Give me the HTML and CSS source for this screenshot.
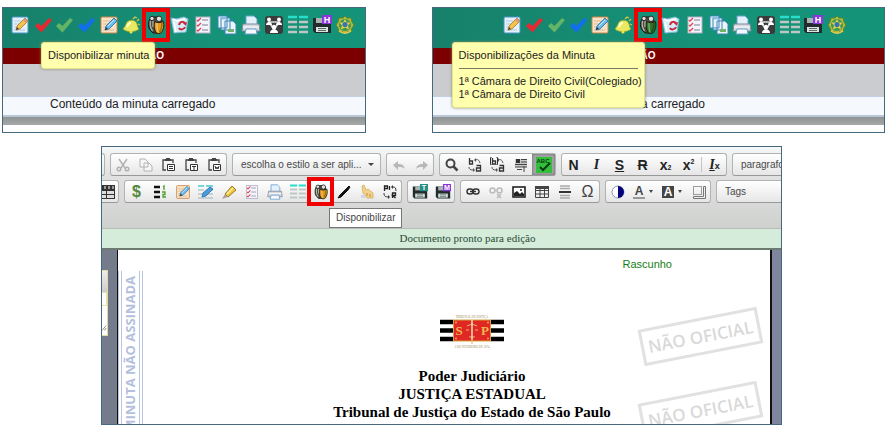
FILE: index.html
```html
<!DOCTYPE html>
<html lang="pt-BR">
<head>
<meta charset="utf-8">
<title>Disponibilizar minuta</title>
<link rel="stylesheet" href="styles.css">
</head>
<body>
<svg class="sprite" aria-hidden="true">
  <symbol id="i-edit" viewBox="0 0 20 20"><rect x="2" y="2" width="16" height="16" rx="1" fill="#e4f1fb" stroke="#4b93c4"/><path d="M4 6h7M4 9h5M4 12h3M4 15h11" stroke="#a9cde8"/><path d="M6 15l1-4 8-8 3 3-8 8z" fill="#f6c24a" stroke="#a8762a" stroke-width=".8"/><path d="M13 5l2-2 3 3-2 2z" fill="#d99a7a"/><path d="M6 15l1-3 2 2z" fill="#444"/></symbol>
  <symbol id="i-sign" viewBox="0 0 20 20"><rect x="2" y="2" width="16" height="16" rx="1" fill="#f8e3c8" stroke="#c98448"/><path d="M4 6h7M4 9h5M4 12h3M4 15h11" stroke="#e3b98c"/><path d="M6 15l1-4 8-8 3 3-8 8z" fill="#69bdf0" stroke="#1f6a9f" stroke-width=".8"/><path d="M9 11l6-6" stroke="#c8ecff"/><path d="M6 15l1-3 2 2z" fill="#333"/></symbol>
  <symbol id="i-check" viewBox="0 0 20 20"><path d="M2 11l3-3 3.500 3 7.500-8 3 2-10.500 12.500z" fill="currentColor"/></symbol>
  <symbol id="i-bell" viewBox="0 0 20 20"><path d="M1 14c1-2 2-2 3-5 1-4 7-5 10-2 2 3 1 5 3 7-3 3-12 4-16 0z" fill="#e9ea62" stroke="#8fa233" stroke-width=".8"/><path d="M5 12c1-2 1-4 4-4" fill="none" stroke="#ffffd0" stroke-width="2"/><path d="M11 4l2-2 2 1M15 6l2-2M16 9l2 1" stroke="#cfc748" fill="none" stroke-width="1.300"/><circle cx="9" cy="17" r="1.600" fill="#f5df43"/></symbol>
  <symbol id="i-jug" viewBox="0 0 20 20"><path d="M4 4C2 7 2 12 4 15l3 3h5l4-3V5l-3-3H6z" fill="#4c4a42" stroke="#171714"/><path d="M4.500 6c-1 4 0 7 2 10M7 6v6" stroke="#b9b8ac" stroke-width="1.300" fill="none"/><circle cx="6" cy="3.500" r="2.200" fill="#dcdcd8" stroke="#2a2a28"/><path d="M8.500 6.500c2 1.500 6 1.500 9 0 1 4 0 8-2 11-2 1.500-4 1.500-5.500 0-2-3-2-7-1.500-11z" fill="currentColor" stroke="#242012"/><circle cx="13" cy="3.800" r="2.700" fill="#e3e2dc" stroke="#2a2a28"/><path d="M11 8c0 4 0 7 1 9" stroke="#fff" stroke-opacity=".35" stroke-width="1.500" fill="none"/><path d="M16 8c0 3-1 7-2.500 9" stroke="#000" stroke-opacity=".3" stroke-width="1.500" fill="none"/></symbol>
  <symbol id="i-recycle" viewBox="0 0 20 20"><path d="M1 3l5 1 8-2 4 2-2 13-12 1z" fill="#d5edf9" stroke="#7fbad6"/><path d="M3 4l4 2 8-2M4 7l2 10" fill="none" stroke="#fff" stroke-width="1.500"/><path d="M9 10c1-4 5-4 6-1M15 12c-1 3-5 3-6 1" fill="none" stroke="#c92639" stroke-width="2"/><path d="M13 8l4-1-1 4z" fill="#c92639"/></symbol>
  <symbol id="i-list" viewBox="0 0 20 20"><rect x="3" y="2" width="14" height="16" fill="#f5f4fa" stroke="#b2afc6"/><path d="M9 5h6M9 10h6M9 15h6" stroke="#a2a5ba" stroke-width="1.500"/><path d="M4 5l1 1 3-3M4 10l1 1 3-3M4 15l1 1 3-3" fill="none" stroke="#df4655" stroke-width="1.400"/></symbol>
  <symbol id="i-docs" viewBox="0 0 20 20"><g fill="#e9f4fd" stroke="#3e83b6"><path d="M1 1h9v12H1zM4 3h9v12H4zM8 6h8l3 3v10H8z"/></g><path d="M2 2h7M5 4h7" stroke="#8dc1e5"/><path d="M11 14h6v3h-6z" fill="#75b36c"/></symbol>
  <symbol id="i-print" viewBox="0 0 20 20"><path d="M5 1h8l3 3v6H5z" fill="#e3f1fc" stroke="#6aa0cd"/><path d="M2 9h16l1 7H1z" fill="#d6d9df" stroke="#7d8999"/><path d="M2 12h16" stroke="#fff"/><path d="M5 14h10l1 5H4z" fill="#f4faff" stroke="#6aa0cd"/></symbol>
  <symbol id="i-people" viewBox="0 0 20 20"><rect x="1" y="1" width="18" height="18" rx="3" fill="#3b3b3b"/><path d="M5 7l10 0-5 8z" fill="none" stroke="#ddd" stroke-width="1.500"/><g fill="#fff"><circle cx="5" cy="4.500" r="2"/><path d="M2 10c0-4 6-4 6 0z"/><circle cx="15" cy="4.500" r="2"/><path d="M12 10c0-4 6-4 6 0z"/><circle cx="10" cy="12" r="2.200"/><path d="M6 18c0-5 8-5 8 0z"/></g></symbol>
  <symbol id="i-cols" viewBox="0 0 20 20"><path d="M0 2h9M11 2h9" stroke="#25dfcc" stroke-width="2.500"/><path d="M0 7h9M11 7h9M0 12h9M11 12h9M0 17h9M11 17h9" stroke="#bfc7c5" stroke-width="2.500"/></symbol>
  <symbol id="i-save" viewBox="0 0 20 20"><path d="M1 3h16l2 2v13H3l-2-2z" fill="#222b2d"/><path d="M4 3h10v5H4z" fill="#a8b5b3"/><path d="M4 12h12v5H4z" fill="#dbe5e0"/><path d="M6 13.500h8M6 15.500h8" stroke="#5d6e6a"/><rect x="10" y="0" width="10" height="9" fill="currentColor"/></symbol>
  <symbol id="i-crest" viewBox="0 0 20 20"><path d="M10 1l2 2 4 0 1 4 2 3-2 3-1 4-4 0-2 2-2-2-4 0-1-4-2-3 2-3 1-4 4 0z" fill="#b9b83c" stroke="#4c8a35"/><circle cx="10" cy="10" r="6" fill="#3c9950"/><path d="M10 4l1.800 3.500H15.500l-2.500 3 1 4-4-2-4 2 1-4-2.500-3h3.700z" fill="#e6d24f"/><circle cx="10" cy="9.500" r="2.600" fill="#3a74b0"/><path d="M4 16c4 3 8 3 12 0" fill="none" stroke="#e3ce56" stroke-width="1.500"/></symbol>

  <symbol id="i-cut" viewBox="0 0 16 16"><path d="M4 2l6 9M12 2L6 11" stroke="currentColor" stroke-width="1.500"/><g fill="none" stroke="currentColor" stroke-width="1.500"><circle cx="4" cy="12" r="1.800"/><circle cx="12" cy="12" r="1.800"/></g></symbol>
  <symbol id="i-copy" viewBox="0 0 16 16"><path d="M2 2h5l3 3v5H2zM6 6h5l3 3v5H6z" fill="#f8f8f8" stroke="currentColor"/></symbol>
  <symbol id="i-paste" viewBox="0 0 16 16"><path d="M5 13H2V3h10v3" fill="none" stroke="#444" stroke-width="1.300"/><path d="M5 2V1h4v1h1v2H4V2z" fill="#444"/><path d="M6.500 7.500h7v6h-7z" fill="#fff" stroke="#333"/></symbol>
  <symbol id="i-undo" viewBox="0 0 16 16"><path d="M2 8l5-4v3c4 0 6 1 7 5-2-2-4-2-7-2v3z" fill="#b8b8b8"/></symbol>
  <symbol id="i-find" viewBox="0 0 16 16"><circle cx="6.500" cy="6.500" r="4" fill="none" stroke="#444" stroke-width="2"/><path d="M9.500 9.500l4 4" stroke="#444" stroke-width="2.500"/></symbol>
  <symbol id="i-replace" viewBox="0 0 16 16"><path d="M2.500 1v6h3V4h-3M9.500 8.500h4V14h-4v-3h4" fill="none" stroke="#333" stroke-width="1.300"/><path d="M8 3c3-1 4 0 5 3M2 10c0 2 1 3 4 3" fill="none" stroke="#555"/><path d="M9 1v4L7 3zM6 11v4l2-2z" fill="#555"/></symbol>
  <symbol id="i-selectall" viewBox="0 0 16 16"><path d="M2 2h12v8H2z" fill="#c9c9c9"/><path d="M3 2h4v4H3z" fill="#333"/><path d="M8 2.500h6M8 5h6M2 7.500h12M2 10h12M4 12.500h5M11 9v6" stroke="#444"/></symbol>
  <symbol id="i-spell" viewBox="0 0 16 16"><path d="M0 0h16v16H0z" fill="#35bd3e"/><path d="M4 10l3 3 7-7" fill="none" stroke="#073e12" stroke-width="2"/></symbol>
  <symbol id="i-cerb" viewBox="0 0 16 16"><path d="M0 1h16v14H0z" fill="#333"/><path d="M1 2h2v3H1zM5 2h2v3H5zM9 2h2v3H9zM13 2h2v3h-2z" fill="#999"/><path d="M1 7h6v3H1zM1 11h6v3H1zM8 7h7v3H8zM8 11h7v3H8z" fill="#ddd"/></symbol>
  <symbol id="i-num" viewBox="0 0 16 16"><path d="M2 3h6M2 8h6M2 13h6" stroke="#111" stroke-width="2.500"/><path d="M11 3l1-1v4M10 8h3v2.500h-2V13h3" fill="none" stroke="#4c9e2e" stroke-width="1.300"/></symbol>
  <symbol id="i-fields" viewBox="0 0 16 16"><path d="M0 2h6M8 2h7" stroke="#4cc" stroke-width="1.500"/><path d="M0 6h6M8 6h7M0 10h6M8 10h7M0 14h15" stroke="#b6c8cc" stroke-width="1.500"/><path d="M4 13l1-4 7-6 3 2-7 7z" fill="#4a9ddb" stroke="#28679f" stroke-width=".8"/></symbol>
  <symbol id="i-mark" viewBox="0 0 16 16"><path d="M4 10l7-8 4 4-8 7z" fill="#f3c63a" stroke="#9a782a"/><path d="M6 10l6-6" stroke="#fff0a1" stroke-width="1.500"/><path d="M4 10l3 3-6 2z" fill="#a8a397"/></symbol>
  <symbol id="i-pen" viewBox="0 0 16 16"><path d="M2 14l2-3 7-7 2-2 1 1-2 3-7 7z" fill="#111" stroke="#111"/></symbol>
  <symbol id="i-hand" viewBox="0 0 16 16"><path d="M3 2l2-1 2 5 2-1 5 4v5H8L4 9z" fill="#f1d28a" stroke="#d4ac5c" stroke-width=".8"/><path d="M8 9v3M11 10v3" stroke="#c58f37"/><path d="M2 11h4v3H2z" fill="#d3d3e8"/></symbol>
  <symbol id="i-order" viewBox="0 0 16 16"><path d="M2.500 7V2h3v2.500h-3M7.500 2v4M10.500 14V9h3v2.500h-3l3 2.500" fill="none" stroke="#222" stroke-width="1.300"/><path d="M11 3c2 0 3 1 3 4M2 9c0 3 1 4 5 4" fill="none" stroke="#333"/><path d="M11 1v4L9 3zM6 11v4l2-2z" fill="#333"/></symbol>
  <symbol id="i-link" viewBox="0 0 16 16"><g fill="none" stroke="#333" stroke-width="1.400"><rect x="2" y="5" width="6" height="5" rx="2.500"/><rect x="8" y="5" width="6" height="5" rx="2.500"/><path d="M5 7.500h6"/></g></symbol>
  <symbol id="i-unlink" viewBox="0 0 16 16"><g fill="none" stroke="#bbb" stroke-width="1.500"><rect x="2" y="4" width="5" height="5" rx="2.500"/><rect x="9" y="4" width="5" height="5" rx="2.500"/><path d="M9 10l4 4M13 10l-4 4"/></g></symbol>
  <symbol id="i-image" viewBox="0 0 16 16"><rect x="2" y="3" width="12" height="10" fill="#fff" stroke="#222" stroke-width="1.600"/><path d="M3 12V9l3-2 3 3 2-2 2 2v2z" fill="#222"/><circle cx="10" cy="6" r="1" fill="#222"/></symbol>
  <symbol id="i-table" viewBox="0 0 16 16"><path d="M1.500 2.500h13v11h-13zM1 6.500h14M1 10h14M6 5v9M10.500 5v9" fill="none" stroke="#444"/><path d="M1 2h14v3H1z" fill="#444"/></symbol>
  <symbol id="i-rule" viewBox="0 0 16 16"><path d="M3 2h10M3 4.500h10M3 11.500h10M3 14h10" stroke="#aaa" stroke-width="1.500"/><path d="M2 8h12" stroke="#333" stroke-width="2"/></symbol>
  <symbol id="i-contrast" viewBox="0 0 16 16"><circle cx="8" cy="8" r="6" fill="#fff" stroke="#9095c4"/><path d="M8 2a6 6 0 0 1 0 12z" fill="#000078"/></symbol>
  <symbol id="i-blocks" viewBox="0 0 16 16"><path d="M2.500 2.500h8v8h-8z" fill="none" stroke="#444" stroke-dasharray="1 1"/><path d="M12.500 2.500h2v12h-12v-2h10z" fill="#eee" stroke="#777"/></symbol>
</svg>

<main class="board">
  <div class="samples">
    <section class="sample">
      <div class="strip">
        <div class="tools">
          <button aria-label="Editar"><svg><use href="#i-edit"/></svg></button>
          <button class="tick red" aria-label="Rejeitar"><svg><use href="#i-check"/></svg></button>
          <button class="tick green" aria-label="Conferir"><svg><use href="#i-check"/></svg></button>
          <button class="tick blue" aria-label="Aprovar"><svg><use href="#i-check"/></svg></button>
          <button aria-label="Assinar"><svg><use href="#i-sign"/></svg></button>
          <button aria-label="Avisar"><svg><use href="#i-bell"/></svg></button>
          <button class="amber marked" aria-label="Disponibilizar"><svg><use href="#i-jug"/></svg></button>
          <button aria-label="Reciclar"><svg><use href="#i-recycle"/></svg></button>
          <button aria-label="Lista"><svg><use href="#i-list"/></svg></button>
          <button aria-label="Documentos"><svg><use href="#i-docs"/></svg></button>
          <button aria-label="Imprimir"><svg><use href="#i-print"/></svg></button>
          <button aria-label="Colegiado"><svg><use href="#i-people"/></svg></button>
          <button aria-label="Colunas"><svg><use href="#i-cols"/></svg></button>
          <button class="violet" aria-label="Salvar modelo"><svg viewBox="0 0 20 20"><use href="#i-save"/><text x="15" y="8" class="tag">H</text></svg></button>
          <button aria-label="Brasão"><svg><use href="#i-crest"/></svg></button>
        </div>
      </div>
      <div class="band">ÃO</div>
      <div class="blank"></div>
      <div class="loaded">Conteúdo da minuta carregado</div>
      <div class="shade"></div>
      <div class="note" role="tooltip">Disponibilizar minuta</div>
    </section>

    <section class="sample wide">
      <div class="strip">
        <div class="tools">
          <button aria-label="Editar"><svg><use href="#i-edit"/></svg></button>
          <button class="tick red" aria-label="Rejeitar"><svg><use href="#i-check"/></svg></button>
          <button class="tick green" aria-label="Conferir"><svg><use href="#i-check"/></svg></button>
          <button class="tick blue" aria-label="Aprovar"><svg><use href="#i-check"/></svg></button>
          <button aria-label="Assinar"><svg><use href="#i-sign"/></svg></button>
          <button aria-label="Avisar"><svg><use href="#i-bell"/></svg></button>
          <button class="leaf marked" aria-label="Disponibilizações"><svg><use href="#i-jug"/></svg></button>
          <button aria-label="Reciclar"><svg><use href="#i-recycle"/></svg></button>
          <button aria-label="Lista"><svg><use href="#i-list"/></svg></button>
          <button aria-label="Documentos"><svg><use href="#i-docs"/></svg></button>
          <button aria-label="Imprimir"><svg><use href="#i-print"/></svg></button>
          <button aria-label="Colegiado"><svg><use href="#i-people"/></svg></button>
          <button aria-label="Colunas"><svg><use href="#i-cols"/></svg></button>
          <button class="violet" aria-label="Salvar modelo"><svg viewBox="0 0 20 20"><use href="#i-save"/><text x="15" y="8" class="tag">H</text></svg></button>
          <button aria-label="Brasão"><svg><use href="#i-crest"/></svg></button>
        </div>
      </div>
      <div class="band">ÃO</div>
      <div class="blank"></div>
      <div class="loaded">Conteúdo da minuta carregado</div>
      <div class="shade"></div>
      <div class="note" role="tooltip">Disponibilizações da Minuta<hr>1ª Câmara de Direito Civil(Colegiado)<br>1ª Câmara de Direito Civil</div>
    </section>
  </div>

  <section class="editor">
    <div class="toolbar">
      <div class="row">
        <div class="group cutoff"></div>
        <div class="group">
          <button class="off" aria-label="Recortar"><svg><use href="#i-cut"/></svg></button>
          <button class="off" aria-label="Copiar"><svg><use href="#i-copy"/></svg></button>
          <button aria-label="Colar"><svg viewBox="0 0 16 16"><use href="#i-paste"/><path d="M8 9.500h4M8 11.500h4" stroke="#333"/></svg></button>
          <button aria-label="Colar como texto"><svg viewBox="0 0 16 16"><use href="#i-paste"/><path d="M8 9.500h4M10 9v4" stroke="#333"/></svg></button>
          <button aria-label="Colar do Word"><svg viewBox="0 0 16 16"><use href="#i-paste"/><path d="M8 9l1 3 1-2 1 2 1-3" fill="none" stroke="#333"/></svg></button>
        </div>
        <div class="group combo style"><select aria-label="Estilo"><option>escolha o estilo a ser apli...</option></select></div>
        <div class="group">
          <button aria-label="Desfazer"><svg><use href="#i-undo"/></svg></button>
          <button class="flip" aria-label="Refazer"><svg><use href="#i-undo"/></svg></button>
        </div>
        <div class="group">
          <button aria-label="Localizar"><svg><use href="#i-find"/></svg></button>
          <button aria-label="Substituir"><svg><use href="#i-replace"/></svg></button>
          <button aria-label="Substituir campos"><svg viewBox="0 0 16 16"><use href="#i-replace"/><path d="M1.500 0.500H0.500v7h1M6.500 0.500h1v7h-1" fill="none" stroke="#333"/></svg></button>
          <button aria-label="Selecionar tudo"><svg><use href="#i-selectall"/></svg></button>
          <button class="pressed" aria-label="Verificar ortografia"><svg viewBox="0 0 16 16"><use href="#i-spell"/><text x="7" y="6" class="abc">ABC</text></svg></button>
        </div>
        <div class="group">
          <button class="glyph">N</button>
          <button class="glyph ital">I</button>
          <button class="glyph under">S</button>
          <button class="glyph strike">R</button>
          <button class="glyph">x<sub>2</sub></button>
          <button class="glyph">x<sup>2</sup></button>
          <span class="divider"></span>
          <button class="glyph clear"><u>I</u><sub>x</sub></button>
        </div>
        <div class="group combo"><select aria-label="Formato"><option>paragrafo</option></select></div>
      </div>

      <div class="row">
        <div class="group cutoff icon"><button aria-label="Cabeçalho"><svg><use href="#i-cerb"/></svg></button></div>
        <div class="group">
          <button class="glyph money">$</button>
          <button aria-label="Numeração"><svg><use href="#i-num"/></svg></button>
          <button aria-label="Assinar"><svg><use href="#i-sign"/></svg></button>
          <button aria-label="Campos"><svg><use href="#i-fields"/></svg></button>
          <button aria-label="Realçar"><svg><use href="#i-mark"/></svg></button>
          <button aria-label="Lista"><svg><use href="#i-list"/></svg></button>
          <button aria-label="Imprimir"><svg><use href="#i-print"/></svg></button>
          <button aria-label="Colunas"><svg><use href="#i-cols"/></svg></button>
          <button class="amber marked" aria-label="Disponibilizar"><svg><use href="#i-jug"/></svg><span class="hint" role="tooltip">Disponibilizar</span></button>
          <button aria-label="Caneta"><svg><use href="#i-pen"/></svg></button>
          <button aria-label="Selecionar"><svg><use href="#i-hand"/></svg></button>
          <button aria-label="Ordenar"><svg><use href="#i-order"/></svg></button>
        </div>
        <div class="group">
          <button class="teal" aria-label="Salvar texto"><svg viewBox="0 0 20 20"><use href="#i-save"/><text x="15" y="8" class="tag">T</text></svg></button>
          <button class="violet" aria-label="Salvar modelo"><svg viewBox="0 0 20 20"><use href="#i-save"/><text x="15" y="8" class="tag">M</text></svg></button>
        </div>
        <div class="group">
          <button aria-label="Link"><svg><use href="#i-link"/></svg></button>
          <button aria-label="Remover link"><svg><use href="#i-unlink"/></svg></button>
          <button aria-label="Imagem"><svg><use href="#i-image"/></svg></button>
          <button aria-label="Tabela"><svg><use href="#i-table"/></svg></button>
          <button aria-label="Linha horizontal"><svg><use href="#i-rule"/></svg></button>
          <button class="glyph omega">Ω</button>
        </div>
        <div class="group">
          <button aria-label="Contraste"><svg><use href="#i-contrast"/></svg></button>
          <button class="glyph arrow"><span class="ink">A</span></button>
          <button class="glyph arrow"><span class="fill">A</span></button>
          <button aria-label="Mostrar blocos"><svg><use href="#i-blocks"/></svg></button>
        </div>
        <div class="group combo"><select aria-label="Tags"><option>Tags</option></select></div>
      </div>
    </div>

    <div class="status">Documento pronto para edição</div>

    <div class="canvas">
      <aside class="side"><div class="card"><div class="card-head"></div><div class="card-line"></div><svg class="grip" viewBox="0 0 6 8"><path d="M0 7l5-6M3 7l2-3" stroke="#777" fill="none"/></svg></div></aside>
      <article class="page">
        <div class="ribbon">MINUTA NÃO ASSINADA</div>
        <div class="stamp">NÃO OFICIAL</div>
        <div class="stamp low">NÃO OFICIAL</div>
        <p class="draft">Rascunho</p>
        <svg class="flag" viewBox="0 0 64 34" role="img" aria-label="Tribunal de Justiça">
          <path d="M0 7h13M51 7h13M0 15.500h13M51 15.500h13M0 24h13M51 24h13" stroke="#000" stroke-width="4.400"/>
          <rect x="13.500" y="5" width="37" height="21" fill="#df2723" stroke="#d6a13a"/>
          <path d="M27 11l5-2 5 2M26 15h3M35 15h3M29 22h6M32 25v4" stroke="#efb36b" fill="none"/>
          <path d="M32 5v20" stroke="#f4dfc0" stroke-width="1.500"/>
          <g fill="#ecac43"><circle cx="16" cy="7.500" r="1"/><circle cx="48" cy="7.500" r="1"/><circle cx="16" cy="23.500" r="1"/><circle cx="48" cy="23.500" r="1"/></g>
          <text x="19" y="19.500" class="flag-letter">S</text><text x="45" y="19.500" class="flag-letter">P</text>
          <text x="32" y="3" class="flag-small">TRIBUNAL DE JUSTIÇA</text><text x="32" y="33" class="flag-small">3 DE FEVEREIRO DE 1874</text>
        </svg>
        <h1>Poder Judiciário<br>JUSTIÇA ESTADUAL<br>Tribunal de Justiça do Estado de São Paulo</h1>
      </article>
    </div>
  </section>
</main>
</body>
</html>
```

FILE: styles.css
```css
* { box-sizing: border-box; }
body { margin: 0; background: #fff; color: #222; font-family: "Liberation Sans", Arial, sans-serif; font-size: 11px; }
.sprite { position: absolute; width: 0; height: 0; }
button { margin: 0; padding: 0; border: 0; background: none; color: inherit; font: inherit; display: flex; align-items: center; justify-content: center; position: relative; }
button svg { display: block; flex: none; }

.board { padding: 7px 4px 0 2px; }
.samples { display: grid; grid-template-columns: 364fr 454fr; gap: 66px; margin-bottom: 13px; }
.sample { position: relative; border: 1px solid #47697f; background: #fff; padding-bottom: 7px; }
.strip { height: 40px; padding: 0 9px 0 7px; background: linear-gradient(90deg, #17806a, #159379 60%); }
.wide .strip { padding-left: 69px; padding-right: 37px; }
.tools { display: flex; justify-content: space-between; height: 34px; }
.tools button { width: 20px; height: 34px; }
.tools .tick { width: 18px; }
.tools svg { width: 20px; height: 20px; }
.marked::after { content: ""; position: absolute; inset: 0 -4px; border: 4px solid #f00000; }
.red { color: #e52832; }
.green { color: #63b565; }
.blue { color: #126ef0; }
.amber { color: #e69c18; }
.leaf { color: #2d7628; }
.violet { color: #8a35dc; }
.teal { color: #278f83; }
.tag { fill: #fff; font-size: 9px; font-weight: bold; text-anchor: middle; }

.band { height: 16px; padding-left: 146px; background: #7c0000; color: #fff; font-size: 10px; font-weight: bold; line-height: 15px; }
.wide .band { padding-left: 208px; }
.blank { height: 33px; background: #cacccf; border-bottom: 1px solid #c4cfe4; }
.loaded { height: 18px; padding-left: 47px; background: #f5f9fe; font-size: 12px; line-height: 14px; }
.wide .loaded { padding-left: 107px; }
.shade { height: 10px; border-top: 2px solid #b9c7d6; background: linear-gradient(#8d9394, #a8a8a8); }
.note { position: absolute; left: 38px; top: 34px; padding: 6px 4px 6px 6px; border: 1px solid #e4e48e; border-radius: 3px; background: #ffffae; box-shadow: 0 0 3px #8a8a66; line-height: 13px; white-space: nowrap; color: #222; }
.wide .note { left: 19px; padding-right: 2px; }
.note hr { margin: 6px 4px 6px 0; border: 0; border-top: 1px solid #77776a; }

.editor { position: relative; margin: 0 103px 0 99px; border: 1px solid #47697f; overflow: hidden; }
.toolbar { display: flex; flex-direction: column; gap: 4px; padding: 6px 0 25px; background: linear-gradient(#f5f8f8, #e2e3e2 30%, #cfd1cf); border-bottom: 1px solid #b9bbb9; }
.row { display: flex; gap: 5px; }
.group { display: flex; flex: none; height: 23px; border: 1px solid #b1b3b1; border-bottom-color: #999; border-radius: 3px; background: linear-gradient(#fff, #e6e6e6); }
.group button { width: 23px; height: 21px; }
.group svg { width: 16px; height: 16px; }
.cutoff { width: 3px; border-left: 0; border-radius: 0 3px 3px 0; }
.cutoff.icon { width: 17px; justify-content: flex-end; overflow: hidden; }
.cutoff.icon button { flex: none; }
.off { color: #b2b2b2; }
.flip svg { transform: scaleX(-1); }
.pressed { background: #a5a5a8; box-shadow: inset 0 0 3px #666; }
.abc { fill: #073e12; font-size: 6px; font-weight: bold; text-anchor: middle; }
.combo { position: relative; width: 120px; }
.combo.style { width: 149px; }
.combo select { width: 100%; padding: 0 8px; border: 0; appearance: none; background: none; color: #484848; font: 10px "Liberation Sans", Arial, sans-serif; }
.combo::after { content: ""; position: absolute; right: 6px; top: 9px; border: 3px solid transparent; border-top-color: #444; border-bottom: 0; }
.group .glyph { color: #222; font-size: 14px; font-weight: bold; }
.glyph sub, .glyph sup { font-size: 7px; line-height: 7px; }
.glyph sub { align-self: flex-end; margin-bottom: 4px; }
.glyph sup { align-self: flex-start; margin-top: 4px; }
.group .ital { font-family: "Liberation Serif", serif; font-style: italic; }
.under { text-decoration: underline; }
.strike { text-decoration: line-through; }
.group .clear { font-family: "Liberation Serif", serif; font-style: italic; }
.clear sub { font: bold 9px/9px "Liberation Sans", sans-serif; }
.group .money { color: #55883d; font-size: 16px; }
.group .omega { color: #444; font-size: 16px; font-weight: normal; }
.divider { width: 1px; height: 15px; margin: 3px 1px; background: #c4c4c4; }
.group .arrow { width: 29px; justify-content: flex-start; padding-left: 4px; font-size: 12px; color: #444; }
.arrow::after { content: ""; margin-left: 4px; border: 2px solid transparent; border-top: 3px solid #444; border-bottom: 0; }
.ink { width: 12px; border-bottom: 2px solid #999; line-height: 12px; }
.fill { width: 12px; background: #444; color: #fff; line-height: 12px; }
.group .marked::after { inset: -4px -2px; }
.hint { position: absolute; z-index: 2; left: 20px; top: 27px; padding: 0 6px; border: 1px solid #777; background: #fff; color: #444; font-size: 10px; line-height: 18px; }

.status { padding-left: 52px; border-bottom: 2px solid #6d7a70; background: #d4ecd9; color: #2b4a36; font: 11px/19px "Liberation Serif", serif; text-align: center; }
.canvas { display: flex; background: linear-gradient(90deg, #747c8c, #7f859c); }
.side { width: 15px; padding-top: 20px; }
.card { width: 6px; border: 1px solid #e0dca0; border-left: 0; background: #fff; }
.card-head { height: 21px; background: linear-gradient(#eee, #ccc); }
.card-line { height: 14px; border: 1px solid #e6e2ad; border-left: 0; }
.grip { display: block; width: 5px; height: 8px; margin: 18px 0 3px; }
.page { position: relative; flex: 1; margin-right: 9px; padding: 7px 0 3px 56px; border-left: 1px solid #111; border-right: 2px solid #111; background: #fff; }
.draft { margin: 0 98px 0 0; color: #138013; line-height: 15px; text-align: right; }
.flag { display: block; width: 64px; height: 34px; margin: 43px auto 18px; }
.flag-letter { fill: #efb94d; font: bold 13px "Liberation Serif", serif; text-anchor: middle; }
.flag-small { fill: #a08a5a; font: 3px "Liberation Serif", serif; text-anchor: middle; }
h1 { margin: 0; color: #000; font: bold 15px/18px "Liberation Serif", serif; text-align: center; }
.ribbon { position: absolute; left: 0; top: 21px; width: 25px; padding: 0 0 5px; border: double #b9c4e0; border-width: 0 4px; writing-mode: vertical-rl; transform: rotate(180deg); color: #b3c0dd; font: bold 13px/17px "Open Sans", sans-serif; white-space: nowrap; }
.stamp { position: absolute; right: 9px; top: 68px; width: 121px; height: 37px; border: 3px solid #e1e1e1; transform: rotate(-11deg); color: #d9d9d9; font: 600 17px/31px "Open Sans", sans-serif; text-align: center; white-space: nowrap; }
.stamp.low { top: 142px; }
```
